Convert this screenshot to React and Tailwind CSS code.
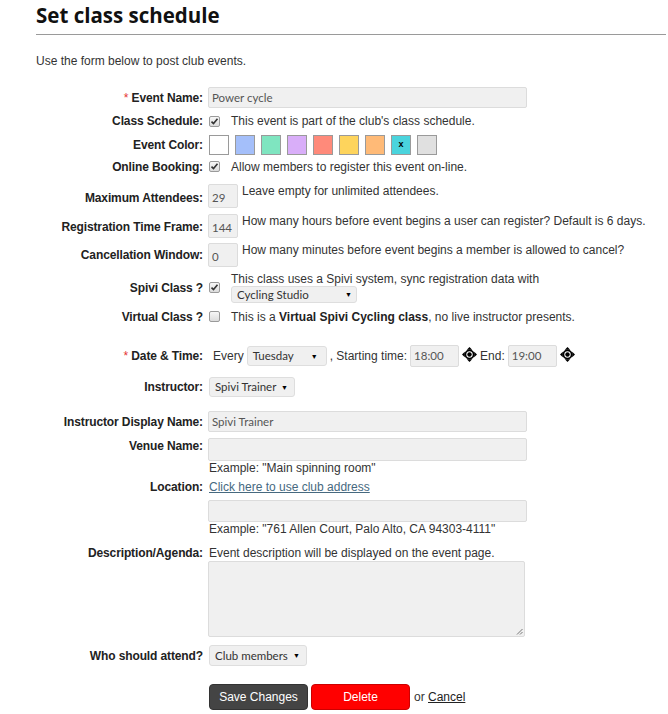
import React from 'react';

const swatches = ['#ffffff', '#a4bffa', '#7fe5c0', '#d9aef9', '#ff8a7a', '#fed45c', '#ffba77', '#4ad4dd', '#e0e0e0'];

function Check({ checked }) {
  return (
    <span className="inline-flex w-[11px] h-[11px] shrink-0 items-center justify-center border border-[#9a9a9a] rounded-[2px] bg-gradient-to-b from-[#f7f7f7] to-[#dcdcdc]">
      {checked && (
        <svg width="9" height="9" viewBox="0 0 9 9">
          <path d="M1.5 4.6 L3.5 6.6 L7.5 1.8" fill="none" stroke="#333" strokeWidth="1.6" />
        </svg>
      )}
    </span>
  );
}

function Select({ value, className }) {
  return (
    <div className={`flex items-center justify-between gap-[3px] whitespace-nowrap bg-[#f0f0f0] border border-[#dedede] rounded-[3px] pl-[5px] font-['Lato',sans-serif] text-[11.5px] text-[#333] ${className}`}>
      <span className="whitespace-nowrap">{value}</span>
      <span className="text-[7px] text-black">▼</span>
    </div>
  );
}

function MoveIcon() {
  return (
    <svg width="15" height="15" viewBox="0 0 15 15" className="shrink-0">
      <path d="M7.5 0 L10.2 2.8 L4.8 2.8 Z M7.5 15 L10.2 12.2 L4.8 12.2 Z M0 7.5 L2.8 4.8 L2.8 10.2 Z M15 7.5 L12.2 4.8 L12.2 10.2 Z" fill="#000" />
      <circle cx="7.5" cy="7.5" r="5" fill="#000" />
      <circle cx="7.5" cy="7.5" r="3.2" fill="#fff" />
      <circle cx="7.5" cy="7.5" r="2.2" fill="#000" />
    </svg>
  );
}

const field = "bg-[#f0f0f0] border border-[#dcdcdc] rounded-[2px] font-['Lato',sans-serif] text-[11.5px] text-[#555] px-[3px] flex items-center";
const label = "w-[167px] shrink-0 text-right font-bold text-[12px] leading-[14px] tracking-[-0.12px] text-[#222] mr-[5px]";

export default function App() {
  return (
    <div className="w-[668px] h-[714px] bg-white overflow-hidden font-['Liberation_Sans',Arial,sans-serif] text-[12px] text-[#333]">
      <div className="pl-[36px]">
        <h1 className="h-[34px] pt-[1px] font-['Open_Sans',sans-serif] font-bold text-[20.5px] leading-[28px] text-[#111]">Set class schedule</h1>
        <div className="h-px bg-[#9a9a9a] mr-[2px]" />
        <p className="mt-[19px] leading-[14px]">Use the form below to post club events.</p>
      </div>

      <div className="pl-[36px] mt-[19px] flex flex-col">
        {/* event name */}
        <div className="flex items-center h-[21px]">
          <div className={label}><span className="text-[#e53333] font-normal">*</span> Event Name:</div>
          <div className={`${field} w-[319px] h-[21px]`}>Power cycle</div>
        </div>

        <div className="flex items-center h-[20px] mt-[3px]">
          <div className={label}>Class Schedule:</div>
          <div className="flex items-center pl-[1px]">
            <Check checked />
            <span className="ml-[11px]">This event is part of the club's class schedule.</span>
          </div>
        </div>

        <div className="flex items-center h-[20px] mt-[4px]">
          <div className={label}>Event Color:</div>
          <div className="flex gap-[6px] pl-[1px]">
            {swatches.map((c, i) => (
              <div key={c} className="w-[20px] h-[20px] border border-[#9a9a9a] flex items-center justify-center text-[9px] font-bold text-black" style={{ backgroundColor: c }}>
                {i === 7 ? 'x' : ''}
              </div>
            ))}
          </div>
        </div>

        <div className="flex items-center h-[19px] mt-[2px]">
          <div className={label}>Online Booking:</div>
          <div className="flex items-center pl-[1px]">
            <Check checked />
            <span className="ml-[11px]">Allow members to register this event on-line.</span>
          </div>
        </div>

        {/* numeric fields */}
        <div className="flex items-start mt-[8px]">
          <div className={`${label} pt-[7px]`}>Maximum Attendees:</div>
          <div className={`${field} w-[30px] h-[24px] items-end pb-[1px]`}>29</div>
          <span className="ml-[4px] leading-[14px]">Leave empty for unlimited attendees.</span>
        </div>

        <div className="flex items-start mt-[6px]">
          <div className={`${label} pt-[6px]`}>Registration Time Frame:</div>
          <div className={`${field} w-[30px] h-[24px] items-end pb-[1px]`}>144</div>
          <span className="ml-[4px] leading-[14px]">How many hours before event begins a user can register? Default is 6 days.</span>
        </div>

        <div className="flex items-start mt-[5px]">
          <div className={`${label} pt-[5px]`}>Cancellation Window:</div>
          <div className={`${field} w-[30px] h-[24px] items-end pb-[1px]`}>0</div>
          <span className="ml-[4px] leading-[14px]">How many minutes before event begins a member is allowed to cancel?</span>
        </div>

        {/* spivi */}
        <div className="flex items-center mt-[5px]">
          <div className={label}>Spivi Class ?</div>
          <div className="flex items-center pl-[1px]">
            <Check checked />
            <div className="ml-[11px] flex flex-col">
              <span className="leading-[14px]">This class uses a Spivi system, sync registration data with</span>
              <Select value="Cycling Studio" className="w-[126px] h-[17px] pr-[4px]" />
            </div>
          </div>
        </div>

        <div className="flex items-center h-[17px] mt-[5px]">
          <div className={label}>Virtual Class ?</div>
          <div className="flex items-center pl-[1px]">
            <Check />
            <span className="ml-[11px]">This is a <b className="text-[#222]">Virtual Spivi Cycling class</b>, no live instructor presents.</span>
          </div>
        </div>

        {/* schedule */}
        <div className="flex items-center h-[22px] mt-[20px]">
          <div className={label}><span className="text-[#e53333] font-normal">*</span> Date &amp; Time:</div>
          <div className="flex items-center">
            <span className="ml-[5px] mr-[3px]">Every</span>
            <Select value="Tuesday" className="w-[80px] h-[20px] pr-[8px]" />
            <span className="ml-[3px] mr-[3px]">, Starting time:</span>
            <div className={`${field} w-[49px] h-[22px]`}>18:00</div>
            <span className="ml-[3px] -mt-[3px]"><MoveIcon /></span>
            <span className="ml-[3px] mr-[3px]">End:</span>
            <div className={`${field} w-[49px] h-[22px]`}>19:00</div>
            <span className="ml-[3px] -mt-[3px]"><MoveIcon /></span>
          </div>
        </div>

        <div className="flex items-center h-[20px] mt-[10px]">
          <div className={label}>Instructor:</div>
          <Select value="Spivi Trainer" className="ml-[1px] w-[86px] h-[20px] pr-[6px]" />
        </div>

        <div className="flex items-center h-[21px] mt-[14px]">
          <div className={label}>Instructor Display Name:</div>
          <div className={`${field} w-[319px] h-[21px]`}>Spivi Trainer</div>
        </div>

        <div className="flex items-start mt-[6px]">
          <div className={`${label} pt-[1px]`}>Venue Name:</div>
          <div className="flex flex-col">
            <div className={`${field} w-[319px] h-[23px]`} />
            <span className="leading-[14px] ml-[1px]">Example: "Main spinning room"</span>
          </div>
        </div>

        <div className="flex items-start mt-[5px]">
          <div className={label}>Location:</div>
          <div className="flex flex-col">
            <a className="leading-[14px] ml-[1px] text-[#46697f] underline">Click here to use club address</a>
            <div className={`${field} w-[319px] h-[22px] mt-[6px]`} />
            <span className="leading-[14px] ml-[1px]">Example: "761 Allen Court, Palo Alto, CA 94303-4111"</span>
          </div>
        </div>

        <div className="flex items-start mt-[10px]">
          <div className={label}>Description/Agenda:</div>
          <div className="flex flex-col">
            <span className="leading-[14px] ml-[1px]">Event description will be displayed on the event page.</span>
            <div className="relative mt-[1px] w-[317px] h-[76px] bg-[#f0f0f0] border border-[#dcdcdc] rounded-[2px]">
              <svg width="7" height="7" viewBox="0 0 7 7" className="absolute right-[1px] bottom-[1px]">
                <path d="M6.5 1 L1 6.5 M6.5 4 L4 6.5" stroke="#777" strokeWidth="1" />
              </svg>
            </div>
          </div>
        </div>

        <div className="flex items-center h-[21px] mt-[8px]">
          <div className={label}>Who should attend?</div>
          <Select value="Club members" className="ml-[1px] w-[98px] h-[21px] pr-[6px]" />
        </div>

        {/* actions */}
        <div className="flex items-center h-[26px] mt-[18px]">
          <div className="w-[172px] shrink-0" />
          <button className="ml-[1px] w-[99px] h-[26px] rounded-[4px] bg-[#444] border border-[#333] text-white text-[12px]">Save Changes</button>
          <button className="ml-[3px] w-[99px] h-[26px] rounded-[4px] bg-[#ff0000] border border-[#c00] text-white text-[12px]">Delete</button>
          <span className="ml-[4px] text-[#333]">or <a className="underline text-[#222]">Cancel</a></span>
        </div>
      </div>
    </div>
  );
}
